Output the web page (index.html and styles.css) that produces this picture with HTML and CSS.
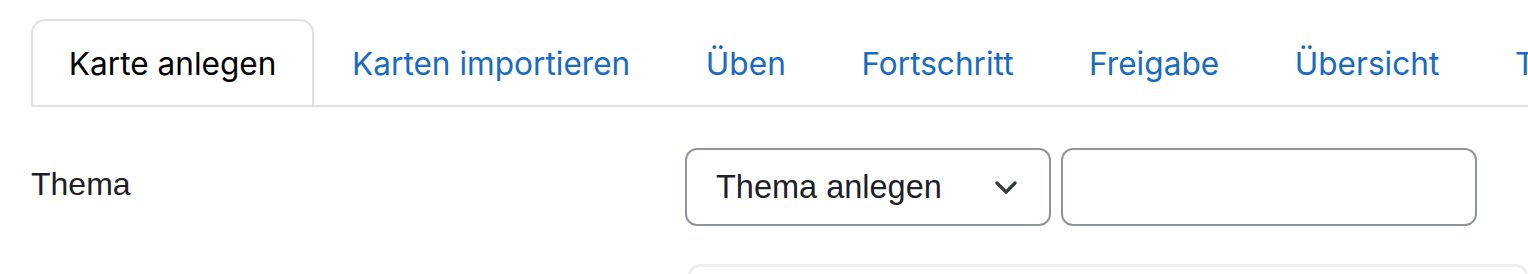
FILE: index.html
```html
<!DOCTYPE html>
<html lang="de">
<head>
<meta charset="utf-8">
<link rel="stylesheet" href="styles.css">
<title>Karte anlegen</title>
</head>
<body>
<div class="page">
  <ul class="tabs">
    <li class="tab active">Karte anlegen</li>
    <li class="tab">Karten importieren</li>
    <li class="tab">Üben</li>
    <li class="tab">Fortschritt</li>
    <li class="tab">Freigabe</li>
    <li class="tab">Übersicht</li>
    <li class="tab">Tipps</li>
  </ul>
  <div class="form-row">
    <div class="label">Thema</div>
    <div class="controls">
      <div class="select">
        <span>Thema anlegen</span>
        <svg class="chev" width="22" height="14" viewBox="0 0 22 14"><path d="M2 2 L11 11 L20 2" fill="none" stroke="#343a40" stroke-width="3.2" stroke-linecap="round" stroke-linejoin="round"/></svg>
      </div>
      <div class="input"></div>
    </div>
  </div>
  <div class="form-row next">
    <div class="label"></div>
    <div class="editor"></div>
  </div>
</div>
</body>
</html>
```

FILE: styles.css
```css
html, body {
  margin: 0;
  padding: 0;
  background: #fff;
  overflow: hidden;
}
body {
  width: 1528px;
  height: 274px;
  font-family: "Liberation Sans", Arial, sans-serif;
  color: #1d2125;
}
.page {
  padding-left: 31px;
  padding-top: 19px;
  height: 255px;
  overflow: hidden;
}
.tabs {
  list-style: none;
  margin: 0;
  padding: 0;
  display: flex;
  flex-wrap: nowrap;
  white-space: nowrap;
  overflow: hidden;
  border-bottom: 2px solid #dee2e6;
}
.tab {
  flex: none;
  font-family: Inter, "Liberation Sans", sans-serif;
  font-size: 31.6px;
  line-height: 45px;
  padding: 19.5px 35.8px;
  border: 2px solid transparent;
  border-top-left-radius: 14px;
  border-top-right-radius: 14px;
  margin-bottom: -2px;
  color: #1a6bc0;
}
.tab.active {
  color: #000;
  border-color: #dee2e6 #dee2e6 #fff;
  background: #fff;
}
.form-row {
  display: grid;
  grid-template-columns: 654px 1fr;
  margin-top: 41px;
  align-items: center;
}
.label {
  font-size: 32px;
  padding-left: 0;
  margin-top: -6px;
  color: #1d2125;
}
.controls {
  display: flex;
  gap: 10px;
}
.select {
  box-sizing: border-box;
  width: 366px;
  height: 78px;
  border: 2px solid #8f959e;
  border-radius: 12px;
  display: flex;
  align-items: center;
  justify-content: space-between;
  padding: 0 32px 0 29px;
  font-size: 32.5px;
  color: #1d2125;
}
.chev {
  margin-top: 2px;
}
.input {
  box-sizing: border-box;
  width: 416px;
  height: 78px;
  border: 2px solid #8f959e;
  border-radius: 12px;
}
.form-row.next {
  margin-top: 38px;
}
.editor {
  box-sizing: border-box;
  margin-left: 3px;
  height: 40px;
  border: 3px solid #eceef0;
  border-radius: 12px;
}
```
